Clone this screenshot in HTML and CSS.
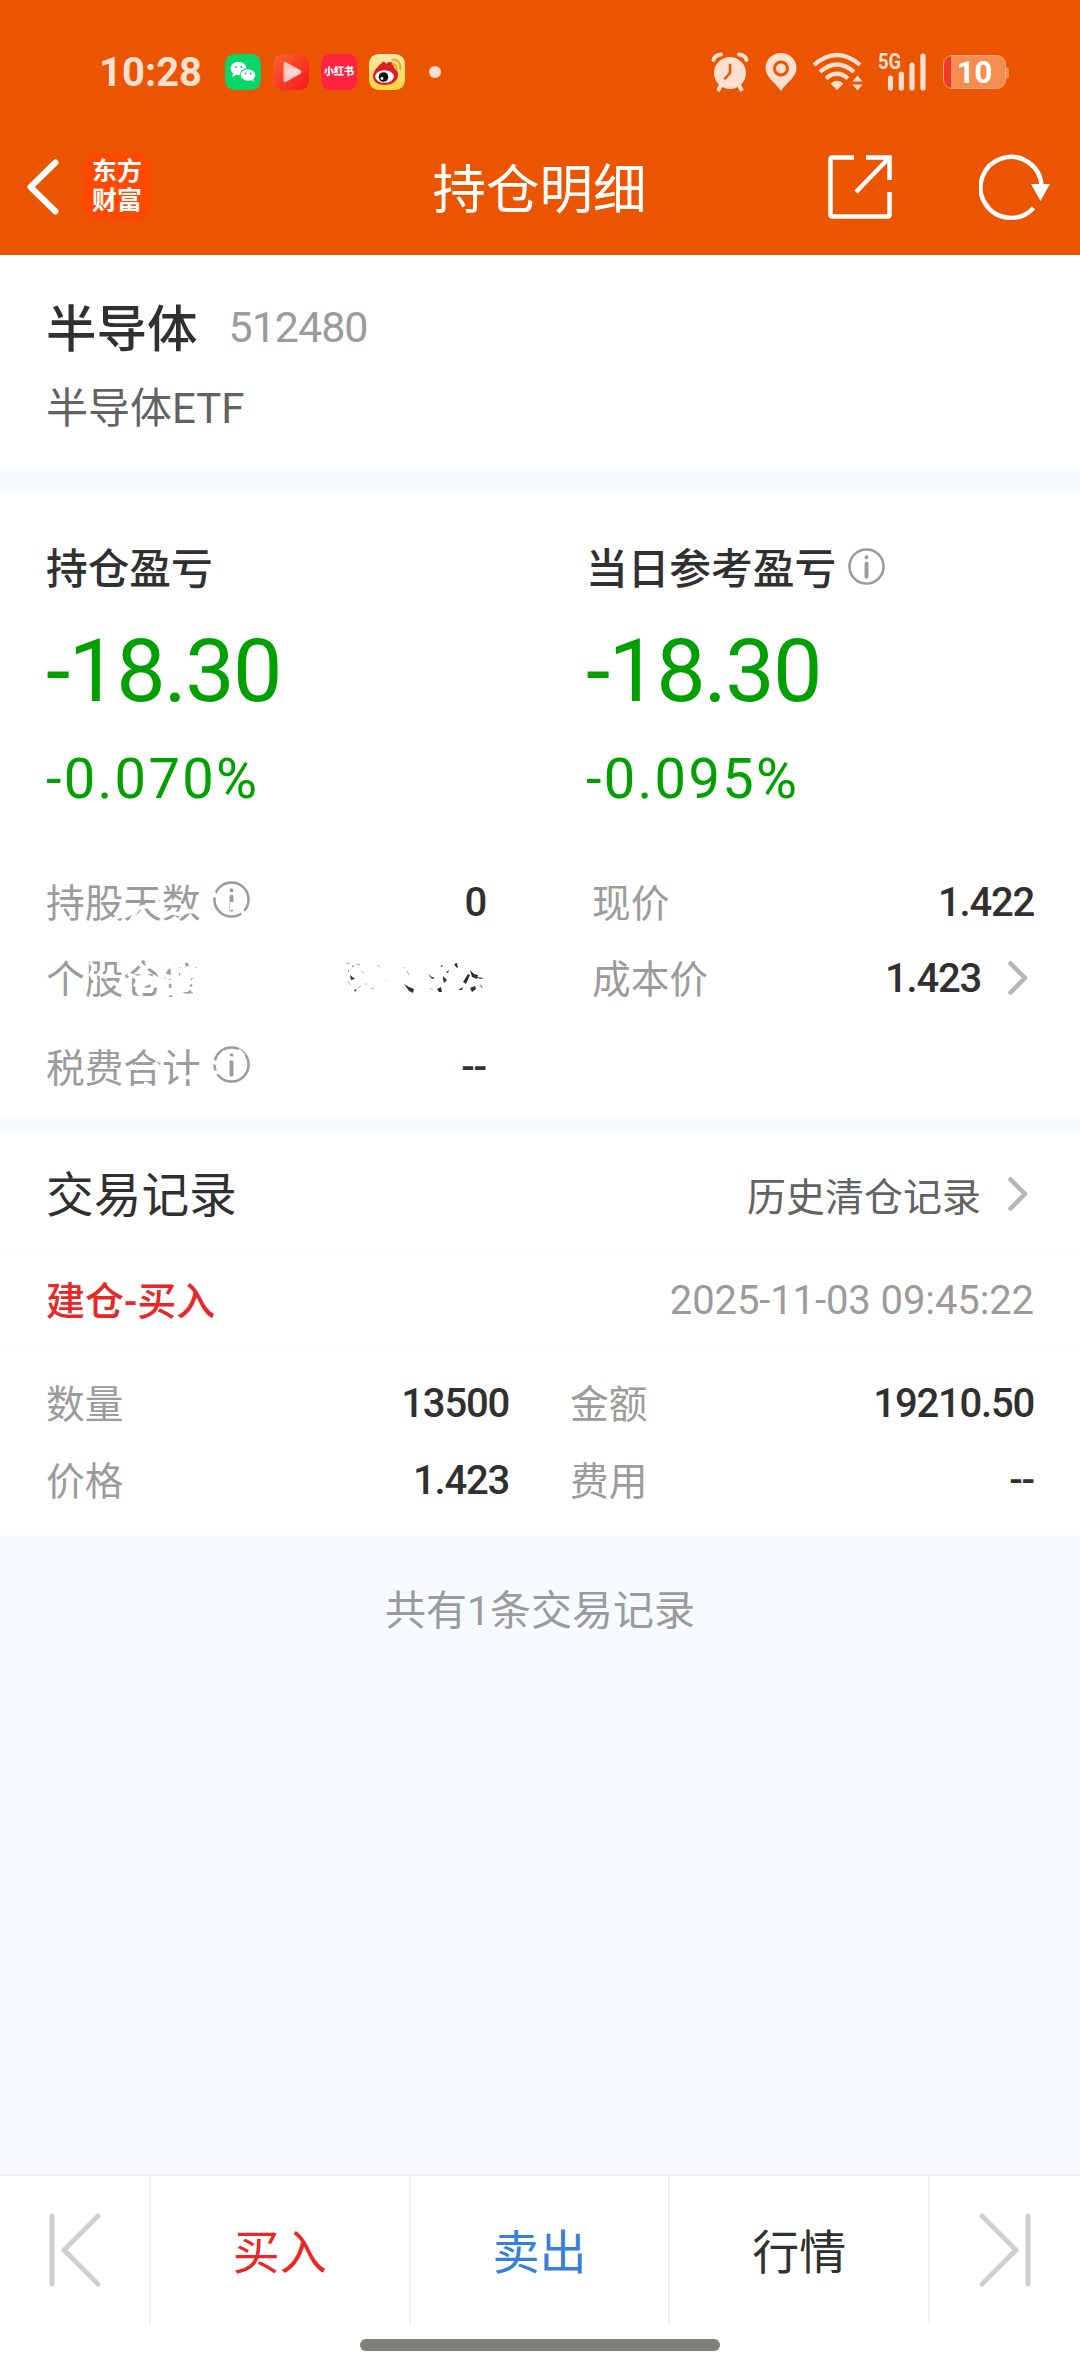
FILE: index.html
```html
<!DOCTYPE html>
<html lang="zh-CN">
<head>
    <meta charset="UTF-8">
    <meta name="viewport" content="width=device-width, initial-scale=1.0">
    <title>持仓明细</title>
    <link rel="stylesheet" href="styles.css">
</head>
<body>
    <header>
        <div class="status-bar">
            <span class="time">10:28</span>
            <div class="apps">
                <svg class="app" viewBox="0 0 36 36">
                    <rect width="36" height="36" rx="9" fill="#06d667"/>
                    <ellipse cx="13.500" cy="14.500" rx="8" ry="6.700" fill="#fff"/>
                    <path d="M8 19l-.5 4 4-2.500z" fill="#fff"/>
                    <ellipse cx="23" cy="21" rx="8.300" ry="6.800" fill="#06d667"/>
                    <ellipse cx="23" cy="21" rx="7.300" ry="5.800" fill="#fff"/>
                    <path d="M25 25l3.500 3-.3-4z" fill="#fff"/>
                    <g fill="#06d667"><circle cx="10.800" cy="13" r="1.100"/><circle cx="16.500" cy="13" r="1.100"/><circle cx="20.500" cy="19.500" r="1"/><circle cx="25.500" cy="19.500" r="1"/></g>
                </svg>
                <svg class="app" viewBox="0 0 36 36">
                    <defs><linearGradient id="play" x1="0" y1="0" x2="1" y2="1"><stop offset="0" stop-color="#fb6430"/><stop offset="1" stop-color="#f4171c"/></linearGradient></defs>
                    <rect width="36" height="36" rx="9" fill="url(#play)"/>
                    <path d="M10.500 9.500v17q0 2.500 2.200 1.500l15-8.500q1.800-1.500 0-3L12.700 8q-2.200-1-2.200 1.500z" fill="#ffc4bb"/>
                    <path d="M10.500 19l8-7.500 10 6-10.500 6.500z" fill="#ffe0da" opacity=".6"/>
                </svg>
                <span class="app app-red">小红书</span>
                <svg class="app" viewBox="0 0 36 36">
                    <defs><linearGradient id="weibo" x1="0" y1="0" x2="0" y2="1"><stop offset="0" stop-color="#ffe9ae"/><stop offset="1" stop-color="#ffd43c"/></linearGradient></defs>
                    <rect width="36" height="36" rx="9" fill="url(#weibo)"/>
                    <path d="M4 22C4 17 10 11 12 10c1-3 4-3 5 0 1-2 5-3 7-1 1 2 0 4 2 6 2 1 3 3 3 6 0 6-6 10-13 10S4 28 4 22z" fill="#dc1f24"/>
                    <ellipse cx="15.500" cy="22.500" rx="9.300" ry="6.300" fill="#fff"/>
                    <circle cx="14.500" cy="23" r="4.800" fill="#111"/>
                    <circle cx="13" cy="24.500" r="1.400" fill="#fff"/>
                    <path d="M23.500 5.500q8.500 0 8 10M23.500 10q4.500 0 4 5" fill="none" stroke="#f7a21b" stroke-width="2" stroke-linecap="round"/>
                </svg>
            </div>
            <span class="dot"></span>
            <div class="status-icons">
                <svg width="38" height="40" viewBox="0 0 38 40">
                    <circle cx="19" cy="21" r="16" fill="#ffdfd0"/>
                    <path d="M2.500 8Q4 3 10 2.500M35.500 8Q34 3 28 2.500" fill="none" stroke="#ffdfd0" stroke-width="4" stroke-linecap="round"/>
                    <path d="M10 33l-3 6M28 33l3 6" stroke="#ffdfd0" stroke-width="4"/>
                    <path d="M19 13v8l-5 5.500" fill="none" stroke="#ec5500" stroke-width="2.500" stroke-linecap="round"/>
                </svg>
                <svg class="pin" width="32" height="40" viewBox="0 0 32 40">
                    <path d="M16 1C7 1 .5 8 .5 16 .5 25 9 29 16 39 23 29 31.500 25 31.500 16 31.500 8 25 1 16 1z" fill="#ffdfd0"/>
                    <circle cx="16" cy="16.500" r="6.500" fill="#ffdfd0" stroke="#ec5500" stroke-width="3"/>
                </svg>
                <svg class="wifi" width="52" height="40" viewBox="0 0 52 40">
                    <path d="M2 13Q25-7 48 13M8 20Q25 5 42 20M14 26.500Q25 17 36 26.500" fill="none" stroke="#ffdfd0" stroke-width="4.200"/>
                    <path d="M18.500 31.500Q25 26 31.500 31.500L25 38z" fill="#ffdfd0"/>
                    <path d="M40.500 29.500h10l-5-6zM40.500 32.500h10l-5 6z" fill="#ffdfd0"/>
                </svg>
                <svg class="signal" width="48" height="48" viewBox="0 -8 48 48">
                    <text x="0" y="17" textLength="23" lengthAdjust="spacingAndGlyphs">5G</text>
                    <path d="M12.500 26v10M23.300 22v14M34 13v23M45 4v32" stroke="#ffdfd0" stroke-width="5.200" stroke-linecap="round"/>
                </svg>
                <div class="battery"><span>10</span></div>
            </div>
        </div>
        <nav>
            <svg width="32" height="56" viewBox="0 0 32 56"><path d="M28.500 3.500L3.500 28l25 24.500" fill="none" stroke="#fff" stroke-width="6" stroke-linecap="round" stroke-linejoin="round"/></svg>
            <div class="logo">东方<br>财富</div>
            <h1>持仓明细</h1>
            <div class="nav-actions">
                <svg width="64" height="64" viewBox="0 0 64 64"><path d="M26 2.500H4.500q-2 0-2 2v55q0 2 2 2h55q2 0 2-2V37M38 2.500h23.500V25M61 3L28 37" fill="none" stroke="#fff" stroke-width="4.500"/></svg>
                <svg width="72" height="66" viewBox="0 0 72 66"><path d="M54.500 54A30.500 30.500 0 1 1 62.500 32" fill="none" stroke="#fff" stroke-width="4.500"/><path d="M52 30h19L61.500 47z" fill="#fff"/></svg>
            </div>
        </nav>
    </header>

    <section class="stock">
        <div class="stock-name"><h2>半导体</h2><span>512480</span></div>
        <p>半导体ETF</p>
    </section>

    <section class="profit">
        <div class="profit-cols">
            <div class="col">
                <h3>持仓盈亏</h3>
                <div class="big">-18.30</div>
                <div class="rate">-0.070%</div>
            </div>
            <div class="col">
                <h3>当日参考盈亏<svg class="info" viewBox="0 0 38 38"><circle cx="19" cy="19" r="17.500"/><path d="M19 16v13.500M19 9.500v.1"/></svg></h3>
                <div class="big">-18.30</div>
                <div class="rate">-0.095%</div>
            </div>
        </div>
        <div class="details">
            <div class="row"><span>持股天数<svg class="info" viewBox="0 0 38 38"><circle cx="19" cy="19" r="17.500"/><path d="M19 16v13.500M19 9.500v.1"/></svg></span><b>0</b></div>
            <div class="row"><span>现价</span><b>1.422</b></div>
            <div class="row"><span>个股仓位</span></div>
            <div class="row"><span>成本价</span><b>1.423<svg class="arrow" viewBox="0 0 20 34"><path d="M2.500 2.500L17 17 2.500 31.500"/></svg></b></div>
            <div class="row"><span>税费合计<svg class="info" viewBox="0 0 38 38"><circle cx="19" cy="19" r="17.500"/><path d="M19 16v13.500M19 9.500v.1"/></svg></span><b>--</b></div>
            <!-- eraser marks over the hidden position ratio -->
            <svg class="scratch" viewBox="0 864 540 240">
                <g class="erase">
                    <path d="M112 920l10-5 12-7M130 922l8-14 10-2M156 898l3 8M162 916l8-4 8 2 12-3 10 2M170 904l6-4M214 893l2 4M242 911l5 8M232 902v8"/>
                    <path d="M90 962l4 5-3 8 5 6-4 8M104 968l-5 6 8 4M112 982l8 4M116 990l12-4"/>
                    <path d="M130 966l8-4 6 6 12-4M128 974l10 4 6-3 10 4M134 984l6 3 8-4M138 992l4 4M148 978l6 10M155 967l6 10"/>
                    <path d="M162 960l8 4 10-5 12 3 10-3M163 968l9-2 8 4 12-2 8 4M163 975l14 4 8-4 16 3M164 983l10-2 10 4 8-3 9 3M164 989l12 2 12-3 14 2M166 995l8-3 12 4 16-2M172 960l2 36M183 960l-2 36M193 960l2 36M199 960l-1 36"/>
                    <path d="M132 1052l4 6M134 1065l4 5M146 1052l6 5M155 1062l5 8M168 1058l5 4M176 1066l2 8M144 1083l5 2M180 1068v6M186 1078l8-3M213 1062l8 2M212 1073l8-1M222 1052l5 3M238 1050l6 6M222 1056l12 3"/>
                </g>
                <path class="bits" d="M350 975l5 4-4 1zM354 990l3-1-2 3zM352 966l2-1-1 2zM348 970l1 1-1 1zM404 984l5 3 5 2-1 4-4-2zM428 974l4 3 3 1-3 1zM443 976l4 4-3 3-1-4zM437 989l4-2 1 5h-3zM440 966l3-1-1 2zM454 964l3-1 1 5-2-1zM463 982l5-8 2 1-4 9zM470 970l4 4 4 1-1 4-5-2zM476 977l8 1-4 1zM470 988l5-2 1 3-4 3zM458 990l5-3-1 3zM480 984l3 4-2-1zM446 972l3-2-1 3z"/>
                <path class="specks" d="M346 964l4-1M356 964l4 1M361 971l3 2M348 982l3 3M358 988l3-2M366 983v2M371 988l3 1M377 965l3 2M386 980v1M404 967v1M407 971l2 4M430 988l3 2"/>
            </svg>
        </div>
    </section>

    <section class="records">
        <div class="records-head">
            <h2>交易记录</h2>
            <a>历史清仓记录<svg class="arrow" viewBox="0 0 20 34"><path d="M2.500 2.500L17 17 2.500 31.500"/></svg></a>
        </div>
        <div class="record-title"><strong>建仓-买入</strong><time>2025-11-03 09:45:22</time></div>
        <div class="record-body">
            <div class="row"><span>数量</span><b>13500</b></div>
            <div class="row"><span>金额</span><b>19210.50</b></div>
            <div class="row"><span>价格</span><b>1.423</b></div>
            <div class="row"><span>费用</span><b>--</b></div>
        </div>
    </section>

    <p class="count">共有1条交易记录</p>

    <footer>
        <div class="tabs">
            <div class="step"><svg width="52" height="74" viewBox="0 0 52 74"><path d="M3 3v68M49 3L15 37l34 34"/></svg></div>
            <a class="buy">买入</a>
            <a class="sell">卖出</a>
            <a>行情</a>
            <div class="step"><svg width="52" height="74" viewBox="0 0 52 74"><path d="M49 3v68M3 3l34 34L3 71"/></svg></div>
        </div>
        <div class="home-bar"></div>
    </footer>
</body>
</html>
```

FILE: styles.css
```css
:root {
    --orange: #ec5500;
    --status: #ffdfd0;
    --green: #00a000;
    --red: #e62828;
    --gray: #9c9b9c;
    --line: #f0f0f1;
}

* {
    box-sizing: border-box;
}

body {
    margin: 0;
    height: 2373px;
    display: flex;
    flex-direction: column;
    background-color: #f7faff;
    color: #303030;
    font-family: Roboto, "Noto Sans CJK SC", sans-serif;
}

h1, h2, h3, p {
    margin: 0;
    font-weight: 400;
}

svg {
    display: block;
    flex-shrink: 0;
}

header {
    height: 255px;
    background-color: var(--orange);
    color: #ffffff;
}

.status-bar {
    display: flex;
    align-items: center;
    height: 94px;
    padding: 50px 74px 0 99px;
}

.time {
    width: 126px;
    color: var(--status);
    font-size: 40px;
    font-weight: 700;
}

.apps {
    display: flex;
    gap: 12px;
}

.app {
    width: 36px;
    height: 36px;
    border-radius: 9px;
}

.app-red {
    background-color: #ff2442;
    font-size: 10px;
    font-weight: 900;
    line-height: 35px;
    text-align: center;
    white-space: nowrap;
}

.dot {
    width: 12px;
    height: 12px;
    margin-left: 24px;
    border-radius: 50%;
    background-color: var(--status);
}

.status-icons {
    display: flex;
    align-items: center;
    margin-left: auto;
}

.pin {
    margin-left: 16px;
}

.wifi {
    margin-left: 15px;
}

.signal {
    margin: -8px 17px 0 14px;
    fill: var(--status);
    font-size: 22px;
    font-weight: 700;
}

.battery {
    position: relative;
    width: 63px;
    height: 34px;
    border: 1px solid #f8a478;
    border-radius: 9px;
    background: linear-gradient(90deg, #f03a2c 7px, #f58c50 7px);
    font-size: 31px;
    font-weight: 700;
    line-height: 34px;
    text-align: center;
}

.battery::after {
    content: "";
    position: absolute;
    top: 11px;
    right: -4px;
    width: 3px;
    height: 12px;
    border-radius: 0 3px 3px 0;
    background-color: #f58c50;
}

nav {
    display: grid;
    grid-template-columns: 56px 1fr auto 1fr;
    align-items: center;
    height: 161px;
    padding: 49px 29px 24px 27px;
}

.logo {
    width: 68px;
    height: 68px;
    padding-top: 4px;
    border-radius: 15px;
    background-color: #ff4800;
    font-size: 25px;
    font-weight: 700;
    line-height: 29px;
    text-align: center;
}

nav h1 {
    margin: 7px 0 0 -55px;
    font-size: 53.5px;
    line-height: 60px;
}

.nav-actions {
    display: flex;
    align-items: center;
    justify-content: flex-end;
    gap: 87px;
}

.stock {
    height: 215px;
    padding: 37px 46px 0;
    background-color: #ffffff;
}

.stock-name {
    display: flex;
    align-items: center;
    height: 66px;
}

.stock-name h2 {
    font-size: 50.5px;
    font-weight: 500;
}

.stock-name span {
    margin-left: 31px;
    padding-top: 3px;
    color: var(--gray);
    font-size: 43px;
    letter-spacing: -1px;
}

.stock p {
    margin-top: 21px;
    color: #626262;
    font-size: 42px;
    line-height: 60px;
}

.profit {
    margin-top: 23px;
    background-color: #ffffff;
    height: 625px;
}

.profit-cols {
    display: grid;
    grid-template-columns: 1fr 1fr;
    height: 371px;
    padding-top: 43px;
}

.col {
    padding-left: 46px;
}

.col h3 {
    display: flex;
    align-items: center;
    height: 60px;
    font-size: 41.7px;
    font-weight: 500;
}

.info {
    width: 37px;
    height: 37px;
    margin-left: 12px;
    fill: none;
    stroke: var(--gray);
    stroke-width: 2.6;
    stroke-linecap: round;
}

.info path {
    stroke-width: 4;
}

.big {
    margin-top: 23px;
    color: var(--green);
    font-size: 88px;
    line-height: 104px;
    letter-spacing: -1.8px;
}

.rate {
    margin-top: 20px;
    color: var(--green);
    font-size: 56px;
    line-height: 72px;
    letter-spacing: 2.3px;
}

.row {
    display: flex;
    align-items: center;
    justify-content: space-between;
    color: var(--gray);
    font-size: 38.7px;
}

.row span,
.row b {
    display: flex;
    align-items: center;
}

.row span {
    padding-bottom: 5px;
}

.row b {
    color: #303030;
    font-size: 40px;
    font-weight: 500;
    letter-spacing: -1.2px;
}

.details {
    position: relative;
    display: grid;
    grid-template-columns: 440px 442px;
    grid-template-rows: 76px 76px 102px;
    column-gap: 106px;
    padding-left: 46px;
}

.scratch {
    position: absolute;
    top: 0;
    left: 0;
    width: 540px;
    height: 240px;
    fill: none;
}

.erase {
    stroke: #ffffff;
    stroke-width: 4;
    stroke-linejoin: round;
}

.bits {
    fill: #303030;
}

.specks {
    stroke: #b0b0b0;
    stroke-width: 1;
}

.arrow {
    width: 20px;
    height: 34px;
    margin: 0 6px 0 27px;
    fill: none;
    stroke: #b5b4b6;
    stroke-width: 4.5;
    stroke-linecap: round;
    stroke-linejoin: round;
}

.records {
    margin-top: 15px;
    height: 402px;
    background-color: #ffffff;
}

.records-head,
.record-title {
    display: flex;
    align-items: center;
    justify-content: space-between;
    padding: 0 46px;
    border-bottom: 1px solid #fafafa;
}

.records-head {
    height: 121px;
}

.records-head h2 {
    padding-bottom: 4px;
    font-size: 47.7px;
}

.records-head a {
    display: flex;
    align-items: center;
    padding-top: 2px;
    color: #626262;
    font-size: 39px;
}

.record-title {
    height: 91px;
    font-size: 39px;
}

.record-title strong {
    padding-bottom: 2px;
    color: var(--red);
    font-weight: 500;
}

.record-title time {
    padding-top: 2px;
    color: var(--gray);
    font-size: 40px;
    letter-spacing: -0.1px;
}

.record-body {
    display: grid;
    grid-template-columns: 463px 464px;
    grid-auto-rows: 77px;
    column-gap: 61px;
    padding: 20px 46px 0;
}

.count {
    margin-top: 46px;
    color: var(--gray);
    font-size: 41px;
    line-height: 60px;
    text-align: center;
}

footer {
    margin-top: auto;
    height: 199px;
    border-top: 2px solid var(--line);
    background-color: #ffffff;
}

.tabs {
    display: grid;
    grid-template-columns: 151px 1fr 1fr 1fr 150px;
    height: 148px;
}

.tabs > * {
    display: flex;
    align-items: center;
    justify-content: center;
    border-right: 2px solid var(--line);
    font-size: 47px;
}

.tabs > :last-child {
    border-right: none;
}

.tabs a {
    padding-bottom: 3px;
}

.step {
    fill: none;
    stroke: #cfcfcf;
    stroke-width: 5;
    stroke-linecap: round;
    stroke-linejoin: round;
}

.buy {
    color: var(--red);
}

.sell {
    color: #3580da;
}

.home-bar {
    width: 360px;
    height: 12px;
    margin: 15px auto 0;
    border-radius: 6px;
    background-color: #7e807b;
}
```
